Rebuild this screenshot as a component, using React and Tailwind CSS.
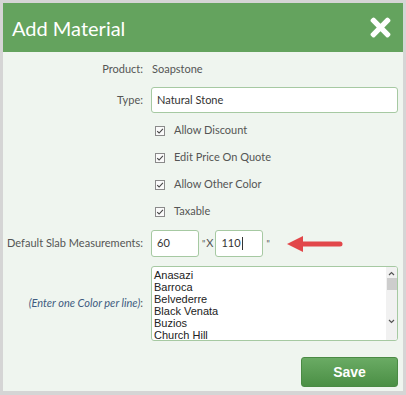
import React from "react";
import { FaTimes } from "react-icons/fa";

const colors = ["Anasazi", "Barroca", "Belvederre", "Black Venata", "Buzios", "Church Hill"];

const options = ["Allow Discount", "Edit Price On Quote", "Allow Other Color", "Taxable"];

const Label = ({ children, className = "" }) => (
  <div className={"w-[148px] shrink-0 whitespace-nowrap pr-[8px] text-right " + className}>{children}</div>
);

const CheckRow = ({ text }) => (
  <div className="flex h-[27px] items-center">
    <Label />
    <div className="flex items-center pl-[4px]">
      <svg width="10" height="10" viewBox="0 0 10 10" className="mr-[9px]">
        <rect x="0.5" y="0.5" width="9" height="9" fill="#fafafa" stroke="#8a8a8a" />
        <path d="M2.2 5.2 L4.1 7 L7.9 2.8" fill="none" stroke="#444" strokeWidth="1.1" />
      </svg>
      <span>{text}</span>
    </div>
  </div>
);

const Arrow = () => (
  <svg width="58" height="18" viewBox="0 0 58 18" className="ml-[16px]">
    <path d="M1 9 L17 1 L17 17 Z" fill="#e2474a" />
    <line x1="15" y1="9" x2="54" y2="9" stroke="#e2474a" strokeWidth="5" strokeLinecap="round" />
  </svg>
);

export default function App() {
  return (
    <div className="h-[395px] w-[406px] bg-[#d5d5d5] pt-[3px] pr-[3px] pb-[4px] pl-[3px] font-['Lato',sans-serif] text-[11px] text-[#555]">
      <div className="flex h-full flex-col bg-[#eff5ef]">
        {/* header */}
        <div className="flex h-[49px] shrink-0 items-center justify-between bg-[#64a35e] pl-[9px] pr-[8px]">
          <h1 className="text-[20px] leading-none text-white">Add Material</h1>
          <FaTimes size={29} color="#ffffff" />
        </div>

        <div className="flex flex-col pt-[4px] pr-[5px]">
          <div className="flex h-[26px] items-center">
            <Label>Product:</Label>
            <span className="pl-[1px]">Soapstone</span>
          </div>

          <div className="mt-[5px] flex h-[26px] items-center">
            <Label>Type:</Label>
            <div className="flex h-[26px] flex-1 items-center rounded-[3px] border border-[#a6c9a2] bg-white pl-[5px] text-[#333]">
              Natural Stone
            </div>
          </div>

          <div className="mt-[4px]">
            {options.map((o) => (
              <CheckRow key={o} text={o} />
            ))}
          </div>

          <div className="mt-[5px] flex h-[27px] items-center">
            <Label>Default Slab Measurements:</Label>
            <div className="flex h-[27px] w-[48px] items-center rounded-[3px] border border-[#a6c9a2] bg-white pl-[5px] text-[#333]">
              60
            </div>
            <span className="ml-[3px] mt-[9px] self-start text-[9px] leading-none">"</span>
            <span className="ml-[1px]">X</span>
            <div className="ml-[2px] flex h-[27px] w-[48px] items-center rounded-[3px] border border-[#a6c9a2] bg-white pl-[5px] text-[#333]">
              110<span className="ml-[1px] inline-block h-[13px] w-px bg-[#333]" />
            </div>
            <span className="ml-[3px] mt-[9px] self-start text-[9px] leading-none">"</span>
            <Arrow />
          </div>

          <div className="mt-[9px] flex items-center">
            <Label className="italic text-[#3e5b80]">
              (Enter one Color per line)<span className="not-italic text-[#555]">:</span>
            </Label>
            <div className="flex h-[75px] flex-1 overflow-hidden rounded-[3px] border border-[#a6c9a2] bg-white">
              <div className="flex-1 pl-[2px] pt-[2px] font-['Liberation_Sans',Arial,sans-serif] text-[11px] leading-[12px] text-[#222]">
                {colors.map((c) => (
                  <div key={c}>{c}</div>
                ))}
              </div>
              <div className="flex w-[11px] flex-col items-center bg-[#f1f1f1]">
                <svg width="7" height="5" viewBox="0 0 7 5" className="mt-[4px]">
                  <path d="M1 4 L3.5 1.5 L6 4" fill="none" stroke="#555" strokeWidth="1.2" />
                </svg>
                <div className="mt-[2px] h-[12px] w-[10px] bg-[#cdcdcd]" />
                <div className="flex-1" />
                <svg width="7" height="5" viewBox="0 0 7 5" className="mb-[16px]">
                  <path d="M1 1 L3.5 3.5 L6 1" fill="none" stroke="#555" strokeWidth="1.2" />
                </svg>
              </div>
            </div>
          </div>

          <div className="mt-[16px] flex justify-end">
            <button className="h-[30px] w-[97px] rounded-[3px] border border-[#4a8a44] bg-gradient-to-b from-[#6aab64] to-[#4b8f45] font-['Liberation_Sans',Arial,sans-serif] text-[14px] font-bold text-white">
              Save
            </button>
          </div>
        </div>
      </div>
    </div>
  );
}
